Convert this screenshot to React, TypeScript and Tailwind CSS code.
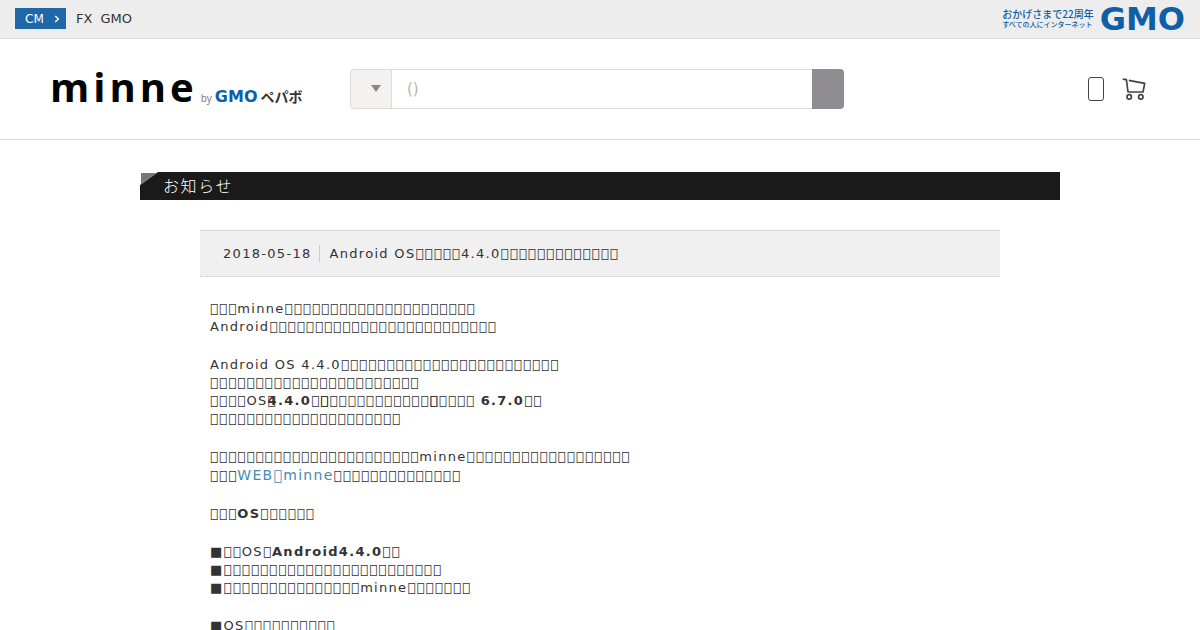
import type { ReactNode } from "react";

// Placeholder glyph for characters the body font does not cover.
const MISSING = "\uF8F0";

function Box({ n }: { n: number }) {
  return <>{MISSING.repeat(n)}</>;
}

// A placeholder glyph drawn twice on the same spot, which darkens it.
function DoubleBox() {
  return (
    <>
      <Box n={1} />
      <span className="-ml-[9px]">
        <Box n={1} />
      </span>
    </>
  );
}

function Para({ children }: { children: ReactNode }) {
  return <p className="leading-[18px]">{children}</p>;
}

function TopBar() {
  return (
    <div className="flex h-[39px] items-center justify-between border-b border-[#dcdcdc] bg-[#ededed] px-[15px] pb-px text-[13px] text-[#333]">
      <nav className="flex items-center">
        <a
          href="#cm"
          className="flex h-[21px] w-[51px] items-center justify-between bg-[#1e67a8] pr-[6px] pl-[10px] text-[12px] text-white"
        >
          CM
          <svg viewBox="0 0 6 8" className="h-2 w-1.5" fill="none" stroke="currentColor" strokeWidth="1.4" aria-hidden="true">
            <path d="M1.2 1 L4.4 4 L1.2 7" />
          </svg>
        </a>
        <a href="#fx" className="ml-[10px]">FX</a>
        <a href="#gmo" className="ml-2">GMO</a>
      </nav>
      <a href="#group" className="flex items-center gap-1.5 text-[#0f5ea8]">
        <span className="flex flex-col font-['Noto_Sans_CJK_JP',sans-serif] font-medium">
          <span className="text-[10px] leading-[12px]">おかげさまで22周年</span>
          <span className="text-[7px] leading-[9px]">すべての人にインターネット</span>
        </span>
        <span className="text-[32px] leading-[32px] font-bold">GMO</span>
      </a>
    </div>
  );
}

function SiteHeader() {
  return (
    <header className="flex h-[101px] items-center border-b border-[#d9d9d9] px-[50px]">
      <a href="#home" className="flex w-[300px] shrink-0 items-baseline gap-[3px] pb-1 whitespace-nowrap">
        <span className="font-['Open_Sans',sans-serif] text-[40px] leading-[44px] font-bold tracking-widest text-black">
          minne
        </span>
        <span className="font-['Open_Sans',sans-serif] text-[10px] text-[#777]">by</span>
        <span className="text-[16px] font-bold text-[#0f5ea8]">GMO</span>
        <span className="font-['Noto_Sans_CJK_JP',sans-serif] text-[14px] font-bold text-[#333]">ペパボ</span>
      </a>
      <form className="flex h-10 w-[494px]" role="search">
        <div className="relative w-[42px] rounded-l border border-[#dadada] bg-[#f3f2f1]">
          <select aria-label="Category" className="h-full w-full appearance-none rounded-l bg-transparent">
            <option value=""></option>
          </select>
          <svg
            viewBox="0 0 10 7"
            className="pointer-events-none absolute top-[15px] right-[10px] h-[7px] w-[10px]"
            fill="#888"
            aria-hidden="true"
          >
            <path d="M0 0H10L5 7Z" />
          </svg>
        </div>
        <input
          type="text"
          aria-label="Search"
          placeholder="()"
          className="min-w-0 flex-1 border-y border-[#dadada] px-[15px] text-[15px] placeholder:text-[#b5b5b5]"
        />
        <button type="submit" aria-label="Submit search" className="w-8 rounded-r bg-[#8f8d92]" />
      </form>
      <div className="ml-auto flex items-center gap-[18px] pr-1">
        <a href="#app" aria-label="App" className="h-6 w-4 rounded-[3px] border border-[#444]" />
        <a href="#cart" aria-label="Cart">
          <svg viewBox="0 0 24 22" className="h-[22px] w-6" fill="none" stroke="#444" strokeWidth="1.7" aria-hidden="true">
            <path d="M.8 1.2L4.4 1.7L6 14H21L22.7 5.4L6.8 2.4" strokeLinejoin="round" />
            <circle cx="7.2" cy="18.9" r="2.2" />
            <circle cx="18.8" cy="18.9" r="2.2" />
          </svg>
        </a>
      </div>
    </header>
  );
}

export default function App() {
  return (
    <div className="h-screen overflow-hidden bg-white font-['DejaVu_Sans',sans-serif]">
      <TopBar />
      <SiteHeader />
      <main className="mx-auto mt-8 max-w-[920px] text-[13px] text-[#333]">
        <h1 className="relative flex h-7 items-center bg-[#1a1a1a] pb-0.5 pl-[23px] font-['Noto_Sans_CJK_JP',sans-serif] text-[16px] leading-6 font-light tracking-widest text-white">
          <svg viewBox="0 0 18 13" className="absolute top-0 left-0 h-[13px] w-[18px]" aria-hidden="true">
            <path d="M0 0H18L0 13Z" fill="#fff" />
            <path d="M1 1H17L1 12.5Z" fill="#777" />
          </svg>
          お知らせ
        </h1>
        <article className="mx-[60px] mt-[30px] tracking-widest">
          <header className="flex h-[47px] items-center border-t border-b border-t-[#d5d5d5] border-b-[#c8c8c8] [border-bottom-style:dotted] bg-[#f0f0f0] pl-[23px]">
            <time dateTime="2018-05-18" className="border-r border-[#ccc] pr-[7px] leading-[17px]">2018-05-18</time>
            <h2 className="pl-[10px]">
              Android OS<Box n={5} />4.4.0<Box n={13} />
            </h2>
          </header>
          <div className="flex flex-col gap-5 px-[10px] pt-[23px] whitespace-nowrap">
            <Para>
              <Box n={3} />minne<Box n={21} />
              <br />
              Android<Box n={25} />
            </Para>
            <Para>
              Android OS 4.4.0<Box n={24} />
              <br />
              <Box n={23} />
              <br />
              <Box n={4} />OS<Box n={1} />
              <strong className="-ml-[9px]">4.4.0</strong>
              <Box n={1} />
              <DoubleBox />
              <Box n={11} />
              <DoubleBox />
              <Box n={4} /> <strong>6.7.0</strong>
              <Box n={2} />
              <br />
              <Box n={21} />
            </Para>
            <Para>
              <Box n={23} />minne<Box n={18} />
              <br />
              <Box n={3} />
              <a href="#web" className="text-[14px] leading-[18px] text-[#428bb5]">
                WEB<Box n={1} />minne
              </a>
              <Box n={14} />
            </Para>
            <Para>
              <Box n={3} />
              <strong>OS</strong>
              <Box n={6} />
            </Para>
            <Para>
              ■<Box n={2} />OS<Box n={1} />
              <strong>Android4.4.0</strong>
              <Box n={2} />
              <br />■<Box n={24} />
              <br />■<Box n={15} />minne<Box n={7} />
            </Para>
            <Para>
              ■OS<Box n={10} />
            </Para>
          </div>
        </article>
      </main>
    </div>
  );
}
